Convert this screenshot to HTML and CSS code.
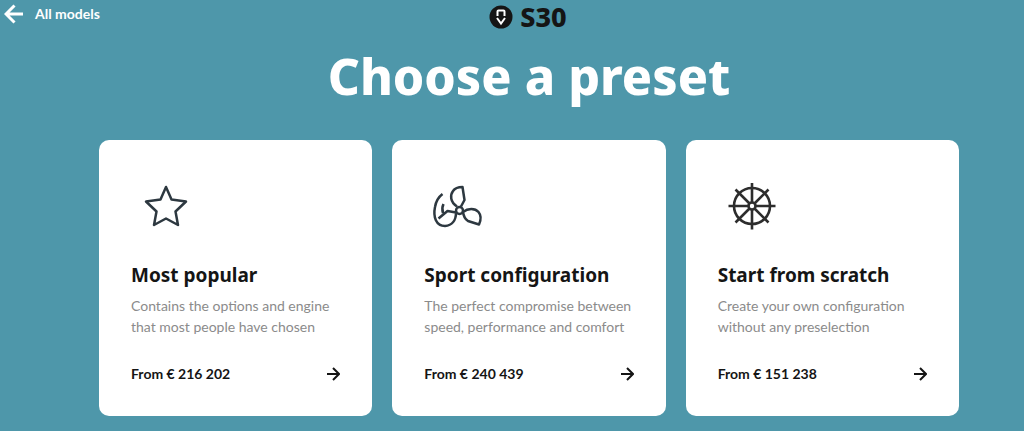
FILE: index.html
```html
<!DOCTYPE html>
<html lang="en">
<head>
  <meta charset="UTF-8" />
  <meta name="viewport" content="width=device-width, initial-scale=1.0" />
  <title>S30 - Choose a preset</title>
  <link rel="stylesheet" href="styles.css">
</head>
<body>
  <header class="header">
    <a href="#" class="back">
      <svg class="back-icon" viewBox="0 0 20 20" aria-hidden="true"><path d="M19 10H2M10.500 1.500L2 10l8.500 8.500" /></svg>
      <span>All models</span>
    </a>
    <div class="model">
      <svg class="model-logo" viewBox="0 0 24 24" aria-hidden="true">
        <circle cx="12" cy="12" r="11.500" />
        <path d="M8.500 11V6.500Q8.500 5.500 9.500 5.500h5Q15.500 5.500 15.500 6.500V11M8 13l4 5.500 4-5.500" />
      </svg>
      <span>S30</span>
    </div>
  </header>

  <main class="container">
    <h1>Choose a preset</h1>
    <div class="presets">
      <a href="#" class="card">
        <svg class="card-icon" viewBox="0 0 70 60" aria-hidden="true">
          <path d="M35 12l5.500 12.500 14.500 2-10.500 10 2.500 13.500-12-6.500-12 6.500 2.500-13.500-10.500-10 14.500-2z" />
        </svg>
        <h2>Most popular</h2>
        <p>Contains the options and engine that most people have chosen</p>
        <div class="card-footer">
          <span>From € 216 202</span>
          <svg class="arrow" viewBox="0 0 14 14" aria-hidden="true"><path d="M1 7h11M7 1l6 6-6 6" /></svg>
        </div>
      </a>

      <a href="#" class="card">
        <svg class="card-icon" viewBox="0 0 70 60" aria-hidden="true">
          <circle cx="35.500" cy="35.500" r="3.500" />
          <path d="M33 31.500C26 27 26 20 29 16c2-3 6-4 9.500-4l2 13-3.500 6.500" />
          <path d="M39 37c5-4 12-4 15.500 0 2.500 3 2.500 8 .5 12.500L44 46c-3-2-4.500-5-5-9" />
          <path d="M32 37.500l-8.500-1.500-9 7.500M32 37.500c0 8-4 13-11 13.500-9 0-12-9-10-19 1-6 3.500-10 7.500-13M19.500 29c-1.500 3-1.500 6-.5 9" />
        </svg>
        <h2>Sport configuration</h2>
        <p>The perfect compromise between speed, performance and comfort</p>
        <div class="card-footer">
          <span>From € 240 439</span>
          <svg class="arrow" viewBox="0 0 14 14" aria-hidden="true"><path d="M1 7h11M7 1l6 6-6 6" /></svg>
        </div>
      </a>

      <a href="#" class="card">
        <svg class="card-icon wheel" viewBox="0 0 70 60" aria-hidden="true">
          <circle cx="34" cy="31" r="18" />
          <circle cx="34" cy="31" r="3.500" />
          <path d="M34 27.500V8M34 34.500V54.500M30.500 31H10.500M37.500 31H57.500M31.500 28.500L17.500 14.500M36.500 33.500l14 14M36.500 28.500l14-14M31.500 33.500l-14 14" />
        </svg>
        <h2>Start from scratch</h2>
        <p>Create your own configuration without any preselection</p>
        <div class="card-footer">
          <span>From € 151 238</span>
          <svg class="arrow" viewBox="0 0 14 14" aria-hidden="true"><path d="M1 7h11M7 1l6 6-6 6" /></svg>
        </div>
      </a>
    </div>
  </main>
</body>
</html>
```

FILE: styles.css
```css
* { box-sizing: border-box; }

body {
  margin: 0;
  background: #4e97aa;
  color: #151515;
  font-family: Lato, "Liberation Sans", sans-serif;
}

a { color: inherit; text-decoration: none; }
h1, h2, p { margin: 0; }
svg { fill: none; stroke: currentColor; flex-shrink: 0; }

.header {
  display: grid;
  grid-template-columns: 98px 1fr 66px;
  align-items: start;
}

.back {
  display: flex;
  align-items: center;
  gap: 11px;
  padding: 4px 0 0 4px;
  color: white;
  font-size: 14px;
  font-weight: bold;
  line-height: 20px;
  white-space: nowrap;
}
.back-icon { width: 20px; height: 20px; stroke-width: 3; }

.model {
  display: flex;
  align-items: center;
  justify-content: center;
  gap: 7px;
  padding-top: 2px;
  font-family: "Noto Sans", sans-serif;
  font-size: 27px;
  font-weight: 800;
  line-height: 30px;
}
.model-logo { width: 24px; height: 24px; }
.model-logo circle { fill: currentColor; stroke: none; }
.model-logo path { stroke: white; stroke-width: 2; }

.container { padding: 0 65px 15px 99px; }

h1 {
  padding: 12px 0 32px;
  color: white;
  font-family: "Noto Sans", sans-serif;
  font-size: 50px;
  font-weight: 800;
  line-height: 64px;
  text-align: center;
}

.presets {
  display: grid;
  grid-template-columns: repeat(auto-fit, minmax(250px, 1fr));
  gap: 20px;
}

.card {
  display: flex;
  flex-direction: column;
  padding: 35px 32px 32px;
  background: white;
  border-radius: 10px;
}
.card-icon { width: 70px; height: 60px; color: #2d3840; stroke-width: 2.5; stroke-linejoin: round; }
.wheel { color: #2d2d2d; stroke-width: 2.6; }

h2 {
  margin-top: 26px;
  font-family: "Noto Sans", sans-serif;
  font-size: 19px;
  font-weight: bold;
  line-height: 28px;
}

.card p {
  margin-top: 6px;
  color: #8b8b8b;
  font-size: 14px;
  line-height: 21px;
}

.card-footer {
  display: flex;
  align-items: center;
  justify-content: space-between;
  margin-top: auto;
  padding-top: 27px;
  font-size: 14px;
  font-weight: bold;
  line-height: 20px;
}
.arrow { width: 14px; height: 14px; stroke-width: 2; }
```
